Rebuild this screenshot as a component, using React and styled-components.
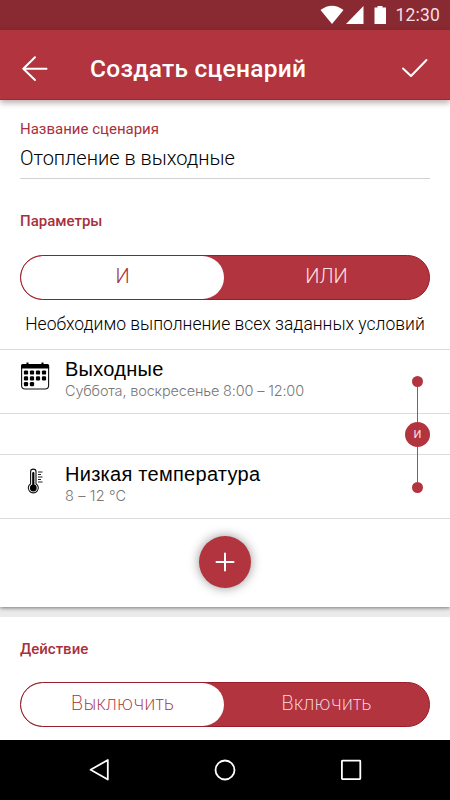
import React from "react";
import styled, { createGlobalStyle } from "styled-components";

const red = "#b2343e";
const ink = "#a8303c";

const GlobalStyle = createGlobalStyle`
  * { box-sizing: border-box; }
  body { margin: 0; background: #fff; font-family: Roboto, "Noto Sans", sans-serif; overflow: hidden; }
`;

const Screen = styled.div`
  width: 450px;
  height: 800px;
  display: flex;
  flex-direction: column;
  background: #ebebeb;
`;

const StatusBar = styled.div`
  height: 30px;
  flex: none;
  background: #892932;
  display: flex;
  align-items: center;
  justify-content: flex-end;
  padding-right: 10px;
`;

const StatusIcons = styled.svg`
  width: 66px;
  height: 30px;
  display: block;
  margin-right: 9px;
`;

const Clock = styled.span`
  font-size: 17.5px;
  line-height: 30px;
  color: #f5dfe1;
  letter-spacing: 0.2px;
`;

const Header = styled.header`
  height: 70px;
  flex: none;
  background: ${red};
  border-bottom: 1px solid #9b2833;
  box-shadow: 0 3px 6px rgba(40, 10, 12, 0.32);
  display: flex;
  align-items: center;
  padding: 8px 20px 0;
  position: relative;
`;

const HeaderIcon = styled.svg`
  width: 30px;
  height: 30px;
  fill: none;
  stroke: #fff;
  stroke-width: 2;
  stroke-linecap: round;
  stroke-linejoin: round;
`;

const Title = styled.h1`
  margin: 0 auto 0 40px;
  font-size: 24.5px;
  line-height: 30px;
  font-weight: 500;
  color: #fff;
  letter-spacing: 0.27px;
`;

const Card = styled.section`
  height: 507px;
  flex: none;
  background: #fff;
  display: flex;
  flex-direction: column;
  box-shadow: 0 1px 4px rgba(0, 0, 0, 0.5);
`;

const ActionCard = styled.section`
  height: 123px;
  flex: none;
  margin-top: 10px;
  background: #fff;
  padding: 22px 20px 0;
`;

const Form = styled.div`
  height: 249px;
  padding: 19px 20px 0;
`;

const Label = styled.div`
  font-size: 15px;
  line-height: 20px;
  height: 20px;
  font-weight: ${(p) => (p.$strong ? 500 : 400)};
  color: ${ink};
  white-space: nowrap;
`;

const Field = styled.div`
  height: 40px;
  padding-top: 7px;
  margin-bottom: 32px;
  border-bottom: 1px solid #d2d2d2;
  font-size: 20px;
  line-height: 24px;
  font-weight: 300;
  color: #000;
  white-space: nowrap;
`;

const Segmented = styled.div`
  display: flex;
  height: 45px;
  margin-top: ${(p) => p.$gap}px;
  border: 1px solid #981c29;
  border-radius: 23px;
  background: ${red};
  overflow: hidden;
`;

const Segment = styled.div`
  flex: ${(p) => (p.$active ? "0 0 203px" : "1")};
  border-radius: 22px;
  background: ${(p) => (p.$active ? "#fff" : "transparent")};
  color: ${(p) => (p.$active ? ink : "#ffdfe2")};
  font-family: ${(p) => (p.$wide ? "Inter" : "Roboto")}, sans-serif;
  font-size: ${(p) => (p.$wide ? 19.5 : 20)}px;
  line-height: 41px;
  font-weight: ${(p) => (p.$wide ? 200 : 300)};
  text-align: center;
`;

const Hint = styled.div`
  margin-top: 12px;
  text-align: center;
  font-size: 17.5px;
  line-height: 24px;
  font-weight: 300;
  color: #000;
  white-space: nowrap;
`;

const Conditions = styled.div`
  position: relative;
  display: flex;
  flex-direction: column;
  border-bottom: 1px solid #dcdcdc;
`;

const Condition = styled.div`
  height: ${(p) => p.$height}px;
  border-top: 1px solid #dcdcdc;
  display: flex;
  padding-left: 20px;
`;

const ConditionIcon = styled.svg`
  width: 30px;
  height: 30px;
  margin: 11px 15px 0 0;
  flex: none;
`;

const ConditionText = styled.div`
  padding-top: 8px;
  white-space: nowrap;
`;

const Name = styled.div`
  font: 20px/23px "Liberation Sans", sans-serif;
  color: #000;
  letter-spacing: 0.27px;
`;

const Detail = styled.div`
  font: 300 14.5px/20px Inter, sans-serif;
  color: #777;
  letter-spacing: ${(p) => p.$track || 0}px;
`;

const Connector = styled.div`
  position: absolute;
  top: 27px;
  right: 20px;
  width: 25px;
  height: 117px;
  display: flex;
  flex-direction: column;
  align-items: center;
`;

const Dot = styled.i`
  width: 11px;
  height: 11px;
  flex: none;
  border-radius: 50%;
  background: ${red};
`;

const Link = styled.i`
  width: 1px;
  flex: 1;
  background: #b04a58;
`;

const Operator = styled.span`
  width: 25px;
  height: 25px;
  border-radius: 50%;
  background: ${red};
  color: #ffe3e6;
  font-size: 11px;
  line-height: 25px;
  text-align: center;
`;

const AddButton = styled.button`
  width: 52px;
  height: 52px;
  margin: 17px auto 0;
  padding: 0;
  border: 0;
  border-radius: 50%;
  background: ${red};
  box-shadow: 0 0 11px rgba(0, 0, 0, 0.42);
  display: grid;
  place-items: center;
`;

const AddIcon = styled.svg`
  width: 20px;
  height: 20px;
  stroke: #fff;
  stroke-width: 2;
  stroke-linecap: round;
`;

const NavBar = styled.nav`
  height: 60px;
  flex: none;
  background: #000;
  display: flex;
  justify-content: center;
  gap: 102px;
  align-items: center;
`;

const NavIcon = styled.svg`
  width: 24px;
  height: 24px;
  fill: none;
  stroke: #fff;
  stroke-width: 1.8;
  stroke-linejoin: round;
`;

const dots = [
  [6, 11.5], [12, 11.5], [18, 11.5], [24, 11.5],
  [6, 17.4], [12, 17.4], [18, 17.4], [24, 17.4],
  [6, 23.2], [12, 23.2],
];

function CalendarIcon() {
  return (
    <ConditionIcon viewBox="0 0 30 30">
      <rect x="1.600" y="3.500" width="27" height="24.500" rx="3.500" fill="#fff" stroke="#111" strokeWidth="1.100" />
      <path d="M1 7.500V4.500Q1 3 2.500 3H6.500V1.500h2V3h13V1.500h2V3h4Q29.200 3 29.200 4.500V7.500Z" fill="#000" />
      {dots.map(([x, y]) => (
        <rect key={`${x}-${y}`} x={x - 2.1} y={y - 2.1} width="4.200" height="4.200" rx="1.200" />
      ))}
    </ConditionIcon>
  );
}

function ThermometerIcon() {
  return (
    <ConditionIcon viewBox="0 0 30 30">
      <path
        d="M10.600 17.700V5.800a2.700 2.700 0 0 1 5.400 0v11.900a5 5 0 1 1-5.400 0Z"
        fill="#fff" stroke="#111" strokeWidth="1.100"
      />
      <path d="M13.300 7v14" stroke="#000" strokeWidth="2.200" strokeLinecap="round" />
      <circle cx="13.300" cy="22" r="3.400" />
      <path d="M18 6h4.500M18 8.500h3M18 11h4.500M18 13.500h3M18 16h4.500" stroke="#222" strokeWidth="1" />
    </ConditionIcon>
  );
}

export default function App() {
  return (
    <Screen>
      <GlobalStyle />
      <StatusBar>
        <StatusIcons viewBox="0 0 66 30" fill="#fff">
          <path d="M0.500 10Q12 1.500 23.500 10L12 24Z" />
          <path d="M43.500 6v18H26Z" />
          <path d="M54.500 7.500H57.500V6h5v1.500h3.500V24H54.500Z" />
        </StatusIcons>
        <Clock>12:30</Clock>
      </StatusBar>
      <Header>
        <HeaderIcon viewBox="0 0 30 30">
          <path d="M26.500 14.700H3.300M15 3.300L3.300 14.700L15 26" />
        </HeaderIcon>
        <Title>Создать сценарий</Title>
        <HeaderIcon viewBox="0 0 30 30">
          <path d="M3 14.500L11 22L26.500 6" />
        </HeaderIcon>
      </Header>
      <Card>
        <Form>
          <Label>Название сценария</Label>
          <Field>Отопление в выходные</Field>
          <Label $strong>Параметры</Label>
          <Segmented $gap={24}>
            <Segment $active>И</Segment>
            <Segment>ИЛИ</Segment>
          </Segmented>
          <Hint>Необходимо выполнение всех заданных условий</Hint>
        </Form>
        <Conditions>
          <Condition $height={64}>
            <CalendarIcon />
            <ConditionText>
              <Name>Выходные</Name>
              <Detail $track={-0.17}>Суббота, воскресенье 8:00 – 12:00</Detail>
            </ConditionText>
          </Condition>
          <Condition $height={41} />
          <Condition $height={64}>
            <ThermometerIcon />
            <ConditionText>
              <Name>Низкая температура</Name>
              <Detail $track={0.15}>8 – 12 °C</Detail>
            </ConditionText>
          </Condition>
          <Connector>
            <Dot />
            <Link />
            <Operator>И</Operator>
            <Link />
            <Dot />
          </Connector>
        </Conditions>
        <AddButton aria-label="Добавить">
          <AddIcon viewBox="0 0 20 20">
            <path d="M10 1.500v17M1.500 10h17" />
          </AddIcon>
        </AddButton>
      </Card>
      <ActionCard>
        <Label $strong>Действие</Label>
        <Segmented $gap={23}>
          <Segment $active $wide>Выключить</Segment>
          <Segment $wide>Включить</Segment>
        </Segmented>
      </ActionCard>
      <NavBar>
        <NavIcon viewBox="0 0 24 24">
          <path d="M20.800 2v19.500L3.600 11.800Z" />
        </NavIcon>
        <NavIcon viewBox="0 0 24 24">
          <circle cx="12" cy="12" r="9.500" />
        </NavIcon>
        <NavIcon viewBox="0 0 24 24">
          <rect x="2.900" y="2.700" width="18.400" height="18.400" rx="0.500" />
        </NavIcon>
      </NavBar>
    </Screen>
  );
}
